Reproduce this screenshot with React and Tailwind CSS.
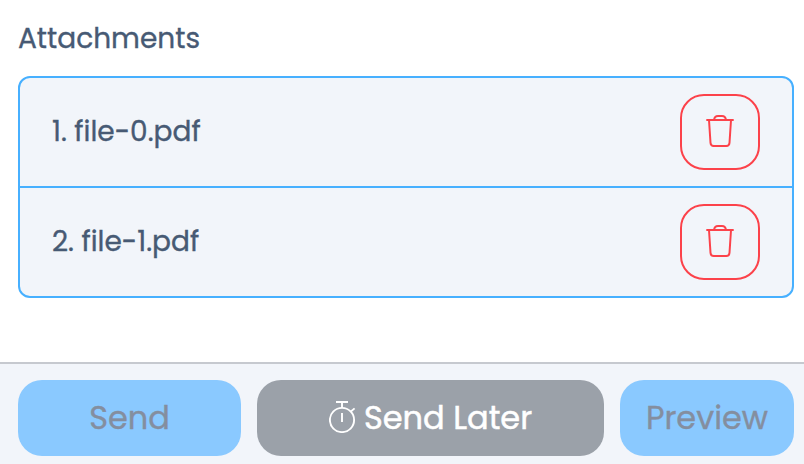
import { clsx } from "clsx";

const files = ["1. file-0.pdf", "2. file-1.pdf"];

function TrashIcon() {
  return (
    <svg
      className="mb-0.5 h-[34px] w-7"
      viewBox="0 0 28 34"
      fill="none"
      stroke="currentColor"
      strokeWidth="2"
      strokeLinejoin="round"
    >
      <path d="M0.3 6H27.7" />
      <path d="M8 6C8.3 3.6 9.7 2 12 2h4c2.3 0 3.7 1.6 4 4" />
      <path d="M3 6l1.5 22.8C4.6 31.2 5.9 32 7.7 32h12.6c1.8 0 3.1-.8 3.2-3.2L25 6" />
    </svg>
  );
}

function StopwatchIcon() {
  return (
    <svg
      className="mb-0.5 h-8 w-[27px] shrink-0"
      viewBox="0 0 27 32"
      fill="none"
      stroke="currentColor"
      strokeWidth="1.9"
    >
      <circle cx="13" cy="19" r="12.1" />
      <path d="M7 1h12M13 1v6M13 12v9" />
      <path d="M21.6 10.8l4-3.4" strokeWidth="1.8" />
    </svg>
  );
}

function FooterButton({ children, className }) {
  return (
    <button
      type="button"
      className={clsx(
        "flex h-[76px] items-center justify-center rounded-3xl text-[32px] leading-none",
        className
      )}
    >
      {children}
    </button>
  );
}

export default function App() {
  return (
    <div className="flex h-screen flex-col overflow-hidden bg-white font-['Poppins','Inter',sans-serif] text-[#475a74] [-webkit-text-stroke:0.35px]">
      <main className="flex-1 pl-[18px] pr-2.5 pt-[19px]">
        <h2 className="h-[57px] text-[28px] leading-10">Attachments</h2>
        <ul className="divide-y-2 divide-[#47b0ff] overflow-hidden rounded-xl border-2 border-[#47b0ff] bg-[#f2f5fa]">
          {files.map((file) => (
            <li key={file} className="box-content flex h-[108px] items-center justify-between px-8">
              <span className="text-[28px] leading-10">{file}</span>
              <button
                type="button"
                aria-label="Delete"
                className="flex h-[76px] w-20 items-center justify-center rounded-3xl border-2 border-[#fc424a] text-[#fc424a]"
              >
                <TrashIcon />
              </button>
            </li>
          ))}
        </ul>
      </main>

      <footer className="flex h-[102px] shrink-0 gap-4 border-t-2 border-[#c6c9cf] bg-[#f2f5fa] pl-[18px] pr-2.5 pt-4">
        <FooterButton className="w-[223px] bg-[#8ac9ff] text-[#848e9f]">Send</FooterButton>
        <FooterButton className="w-[347px] gap-2 bg-[#9ba1a9] text-white [-webkit-text-stroke:0.5px]">
          <StopwatchIcon />
          Send Later
        </FooterButton>
        <FooterButton className="w-[174px] bg-[#8ac9ff] text-[#848e9f]">Preview</FooterButton>
      </footer>
    </div>
  );
}
